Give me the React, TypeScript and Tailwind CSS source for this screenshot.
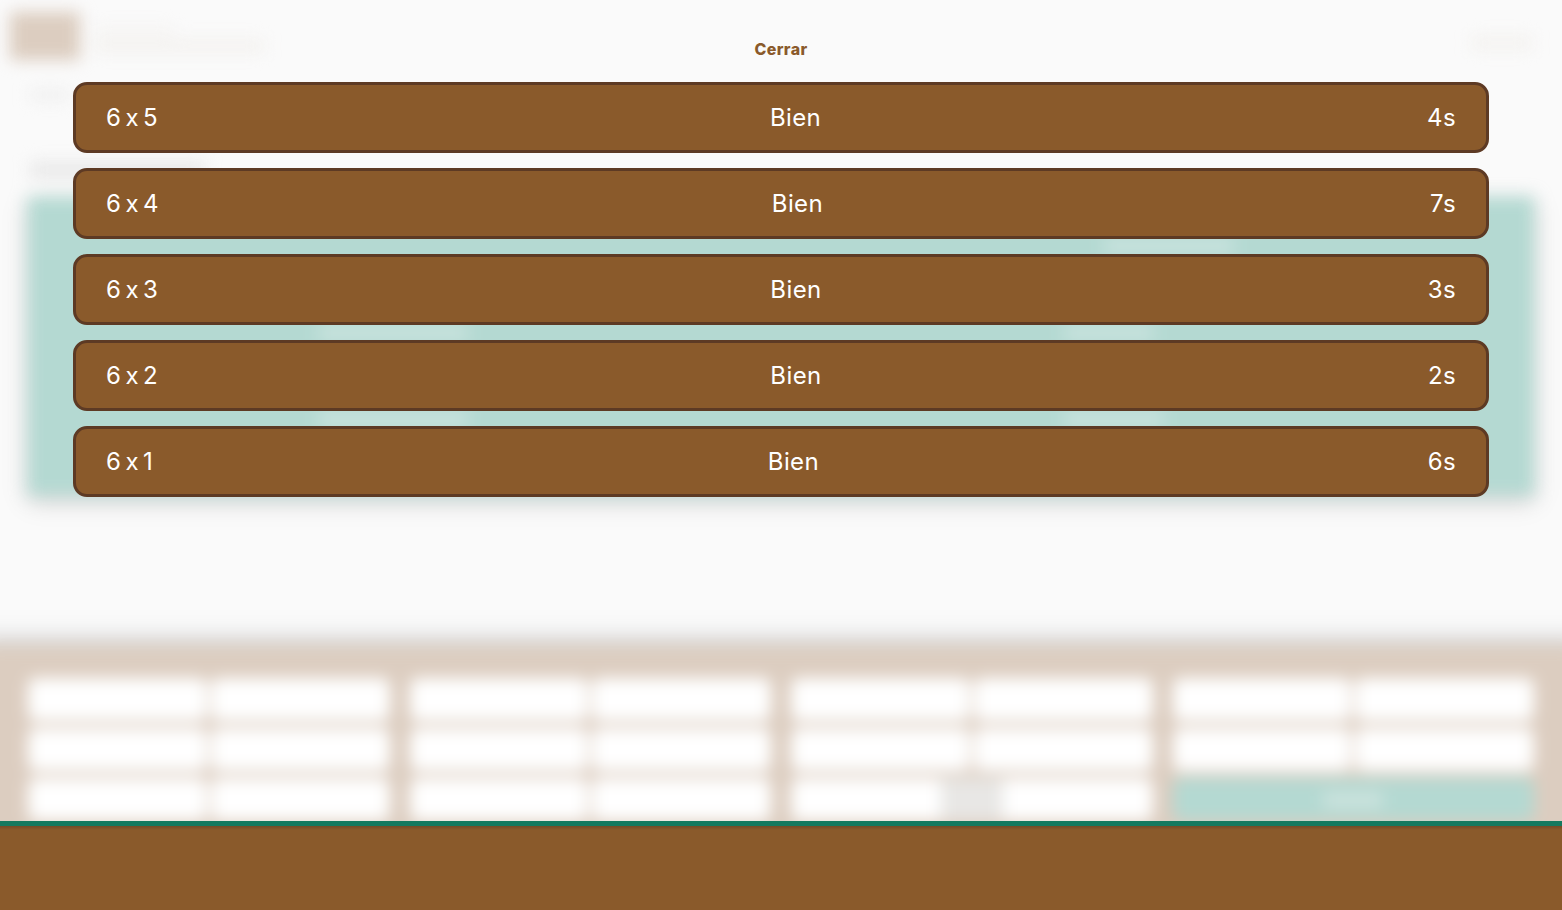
const results = [
  { op: '6 x 5', label: 'Bien', time: '4s' },
  { op: '6 x 4', label: 'Bien', time: '7s' },
  { op: '6 x 3', label: 'Bien', time: '3s' },
  { op: '6 x 2', label: 'Bien', time: '2s' },
  { op: '6 x 1', label: 'Bien', time: '6s' },
];

function KeyPair() {
  return (
    <div className="grid grid-cols-2 gap-[4px] h-[43px]">
      <div className="rounded-lg bg-white" />
      <div className="rounded-lg bg-white" />
    </div>
  );
}

function Keypad() {
  return (
    <div className="-mx-[20px] h-[265px] shrink-0 bg-[#dccdc0] px-[48px] pt-[33px] shadow-[0_-6px_16px_rgba(0,0,0,0.2)]">
      <div className="grid grid-cols-4 gap-x-[20px] gap-y-[7px]">
        <KeyPair />
        <KeyPair />
        <KeyPair />
        <KeyPair />
        <KeyPair />
        <KeyPair />
        <KeyPair />
        <KeyPair />
        <KeyPair />
        <KeyPair />
        <div className="flex h-[43px] rounded-lg bg-white">
          <div className="flex-1" />
          <div className="w-[62px] bg-[#e8e7e5]" />
          <div className="flex-1" />
        </div>
        <div className="flex h-[43px] items-center justify-center rounded-lg bg-[#b4d9d2]">
          <div className="w-[60px] h-[14px] bg-[#cfe4df]" />
        </div>
      </div>
    </div>
  );
}

function Page() {
  return (
    <div className="flex h-[910px] flex-col blur-[8px]">
      <div className="flex items-center justify-between h-[72px] shrink-0 pl-[10px] pr-[30px]">
        <div className="flex items-center gap-[14px]">
          <div className="w-[70px] h-[48px] bg-[#dccdc0]" />
          <div className="flex flex-col gap-[6px] mt-[8px]">
            <div className="w-[80px] h-[6px] bg-[#f3f1ee]" />
            <div className="w-[170px] h-[12px] bg-[#f3f1ee]" />
          </div>
        </div>
        <div className="w-[60px] h-[12px] mt-[14px] bg-[#f3f1ee]" />
      </div>
      <div className="ml-[30px] mt-[18px] w-[40px] h-[10px] shrink-0 bg-[#eeeeee]" />
      <div className="ml-[30px] mt-[62px] w-[175px] h-[16px] shrink-0 bg-[#e8e8e8]" />
      <div className="mx-[28px] mt-[19px] flex h-[298px] shrink-0 flex-col bg-[#b4d9d2] pt-[42px] shadow-[0_6px_18px_rgba(0,0,0,0.2)]">
        <div className="flex h-[14px] justify-end pr-[300px]">
          <div className="w-[130px] bg-[#cbe4df]" />
        </div>
        <div className="mt-[73px] flex h-[14px] justify-between pl-[290px] pr-[380px]">
          <div className="w-[150px] bg-[#cbe4df]" />
          <div className="w-[90px] bg-[#cbe4df]" />
        </div>
        <div className="mt-[72px] flex h-[14px] justify-between pl-[290px] pr-[370px]">
          <div className="w-[150px] bg-[#cbe4df]" />
          <div className="w-[100px] bg-[#cbe4df]" />
        </div>
      </div>
      <div className="flex-1" />
      <Keypad />
    </div>
  );
}

export default function App() {
  return (
    <div className="relative flex h-screen flex-col overflow-hidden bg-[#fafafa] font-['Inter','Liberation_Sans',sans-serif]">
      <div className="min-h-0 flex-1 overflow-hidden">
        <Page />
      </div>
      <div className="h-[89px] shrink-0 border-t-[5px] border-[#14795f] bg-[linear-gradient(#744a26,#8a5a2b_4px)]" />
      <div className="absolute inset-x-0 top-0 flex flex-col px-[73px] pt-[40px]">
        <button type="button" className="h-[18px] mb-[24px] text-[16px] leading-[18px] font-extrabold tracking-[0.4px] text-[#8a5a2b]">
          Cerrar
        </button>
        <div className="flex flex-col gap-[15px]">
          {results.map(row => (
            <div
              key={row.op}
              className="flex h-[71px] items-center justify-between rounded-[14px] border-[3px] border-[#5d3a24] bg-[#8a5a2b] px-[30px] text-[24px] tracking-[0.4px] text-white [font-feature-settings:'calt'_0] [word-spacing:-3px]"
            >
              <span>{row.op}</span>
              <span className="ml-[6px]">{row.label}</span>
              <span>{row.time}</span>
            </div>
          ))}
        </div>
      </div>
    </div>
  );
}
